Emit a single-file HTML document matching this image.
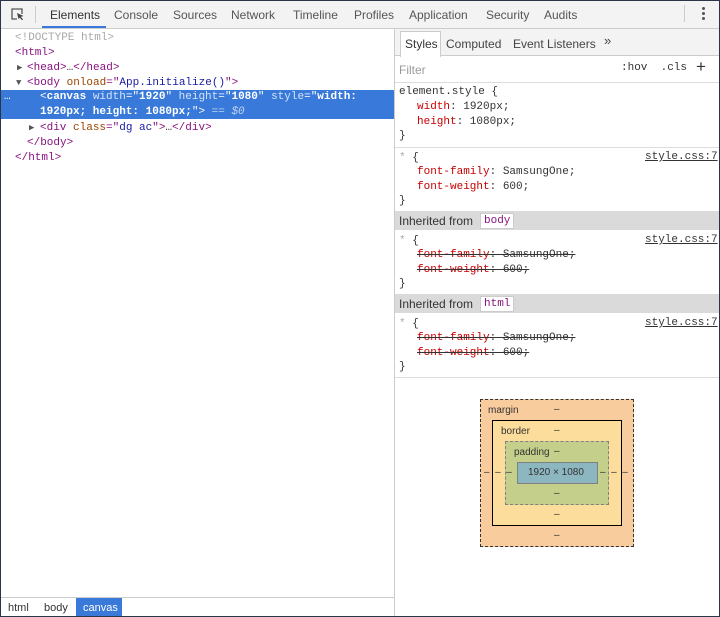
<!DOCTYPE html>
<html><head><style>
*{margin:0;padding:0;box-sizing:border-box}
body{width:720px;height:617px;overflow:hidden;background:#fff;font-family:"Liberation Sans",sans-serif;font-size:12px;color:#333;position:relative}
.a{position:absolute;white-space:pre}
.m{font-family:"Liberation Mono",monospace;font-size:11px}
.tag{color:#881280}.an{color:#994500}.av{color:#1a1aa6}.g{color:#a8a8a8}
.pn{color:#c80000}
.s{text-decoration:line-through}
.i{padding-left:18px}
</style></head><body>
<div class="a" style="left:0;top:0;width:720px;height:617px;border:1px solid #2a3646;z-index:9;pointer-events:none"></div>
<div class="a" style="left:0;top:0;width:720px;height:29px;background:#f3f3f3;border-bottom:1px solid #ccc"></div>
<svg class="a" style="left:10px;top:7px" width="15" height="15" viewBox="0 0 15 15"><path d="M7 12H2V2h10v5" fill="none" stroke="#555" stroke-width="1.3"/><path d="M7 6l6.5 3-2.7.9 2.2 2.5-1 .8-2.1-2.5L8.5 12z" fill="#444"/></svg>
<div class="a" style="left:35px;top:6px;width:1px;height:17px;background:#ccc"></div>
<div class="a" style="left:42px;top:0;width:64px;height:28px;border-bottom:2px solid #3879d9"></div>
<div class="a" style="left:50px;top:8px;color:#333">Elements</div>
<div class="a" style="left:114px;top:8px;color:#555">Console</div>
<div class="a" style="left:173px;top:8px;color:#555">Sources</div>
<div class="a" style="left:231px;top:8px;color:#555">Network</div>
<div class="a" style="left:293px;top:8px;color:#555">Timeline</div>
<div class="a" style="left:354px;top:8px;color:#555">Profiles</div>
<div class="a" style="left:409px;top:8px;color:#555">Application</div>
<div class="a" style="left:486px;top:8px;color:#555">Security</div>
<div class="a" style="left:544px;top:8px;color:#555">Audits</div>
<div class="a" style="left:684px;top:5px;width:1px;height:17px;background:#ccc"></div>
<div class="a" style="left:702px;top:7px;width:3px;height:3px;background:#555;border-radius:2px;box-shadow:0 5px 0 #555,0 10px 0 #555"></div>
<div class="a" style="left:0;top:90px;width:394px;height:29px;background:#3879d9"></div>
<div class="a m g" style="left:15px;top:31px;line-height:15px">&lt;!DOCTYPE html&gt;</div>
<div class="a m tag" style="left:15px;top:46px;line-height:15px">&lt;html&gt;</div>
<div class="a m" style="left:17px;top:61px;line-height:15px;font-size:9px;color:#555">▶</div>
<div class="a m tag" style="left:27px;top:61px;line-height:15px">&lt;head&gt;<span style="color:#333">…</span>&lt;/head&gt;</div>
<div class="a m" style="left:16px;top:76px;line-height:15px;font-size:9px;color:#555">▼</div>
<div class="a m tag" style="left:27px;top:76px;line-height:15px">&lt;body <span class="an">onload</span>="<span class="av">App.initialize()</span>"&gt;</div>
<div class="a m" style="left:4px;top:90px;line-height:15px;color:#fff">…</div>
<div class="a m" style="left:40px;top:90px;line-height:14.5px;color:#fff">&lt;<b>canvas</b> <span style="color:#d6e4f8">width</span>="<b>1920</b>" <span style="color:#d6e4f8">height</span>="<b>1080</b>" <span style="color:#d6e4f8">style</span>="<b>width:</b>
<b>1920px; height: 1080px;</b>"&gt; <span style="color:#c0d4f0">== <i>$0</i></span></div>
<div class="a m" style="left:29px;top:121px;line-height:15px;font-size:9px;color:#555">▶</div>
<div class="a m tag" style="left:40px;top:121px;line-height:15px">&lt;div <span class="an">class</span>="<span class="av">dg ac</span>"&gt;<span style="color:#333">…</span>&lt;/div&gt;</div>
<div class="a m tag" style="left:27px;top:136px;line-height:15px">&lt;/body&gt;</div>
<div class="a m tag" style="left:15px;top:151px;line-height:15px">&lt;/html&gt;</div>
<div class="a" style="left:0;top:597px;width:394px;height:20px;border-top:1px solid #ccc;background:#fff"></div>
<div class="a" style="left:8px;top:602px;font-size:11px">html</div>
<div class="a" style="left:44px;top:602px;font-size:11px">body</div>
<div class="a" style="left:76px;top:598px;width:46px;height:19px;background:#3879d9"></div>
<div class="a" style="left:83px;top:602px;font-size:11px;color:#fff">canvas</div>
<div class="a" style="left:394px;top:29px;width:1px;height:588px;background:#ccc"></div>
<div class="a" style="left:395px;top:29px;width:325px;height:27px;background:#f3f3f3;border-bottom:1px solid #ccc"></div>
<div class="a" style="left:400px;top:31px;width:41px;height:26px;background:#fff;border:1px solid #ccc;border-bottom:none"></div>
<div class="a" style="left:405px;top:37px">Styles</div>
<div class="a" style="left:446px;top:37px;color:#444">Computed</div>
<div class="a" style="left:513px;top:37px;color:#444">Event Listeners</div>
<div class="a" style="left:604px;top:33px;font-size:13px;color:#444">»</div>
<div class="a" style="left:399px;top:63px;color:#999">Filter</div>
<div class="a m" style="left:621px;top:62px;color:#333">:hov  .cls</div>
<div class="a" style="left:696px;top:57px;font-size:17px;color:#333">+</div>
<div class="a" style="left:395px;top:82px;width:325px;height:1px;background:#ddd"></div>
<div class="a m" style="left:399px;top:85px;line-height:14.8px;color:#333">element.style {
<span class="i"><span class="pn">width</span>: 1920px;</span>
<span class="i"><span class="pn">height</span>: 1080px;</span>
}</div>
<div class="a" style="left:395px;top:147px;width:325px;height:1px;background:#ddd"></div>
<div class="a m" style="left:399px;top:151px;line-height:14.3px;color:#333"><span class="g">*</span> {
<span class="i"><span class="pn">font-family</span>: SamsungOne;</span>
<span class="i"><span class="pn">font-weight</span>: 600;</span>
}</div>
<div class="a m" style="left:645px;top:151px;text-decoration:underline;color:#333">style.css:7</div>
<div class="a" style="left:395px;top:211px;width:325px;height:19px;background:#dadada"></div>
<div class="a" style="left:399px;top:214px;color:#333">Inherited from</div>
<div class="a m tag" style="left:480px;top:213px;background:#fff;padding:1px 3px;border:1px solid #ccc">body</div>
<div class="a m" style="left:399px;top:234px;line-height:14.3px;color:#333"><span class="g">*</span> {
<span class="i"><span class="s"><span class="pn">font-family</span>: SamsungOne;</span></span>
<span class="i"><span class="s"><span class="pn">font-weight</span>: 600;</span></span>
}</div>
<div class="a m" style="left:645px;top:234px;text-decoration:underline;color:#333">style.css:7</div>
<div class="a" style="left:395px;top:294px;width:325px;height:19px;background:#dadada"></div>
<div class="a" style="left:399px;top:297px;color:#333">Inherited from</div>
<div class="a m tag" style="left:480px;top:296px;background:#fff;padding:1px 3px;border:1px solid #ccc">html</div>
<div class="a m" style="left:399px;top:317px;line-height:14.3px;color:#333"><span class="g">*</span> {
<span class="i"><span class="s"><span class="pn">font-family</span>: SamsungOne;</span></span>
<span class="i"><span class="s"><span class="pn">font-weight</span>: 600;</span></span>
}</div>
<div class="a m" style="left:645px;top:317px;text-decoration:underline;color:#333">style.css:7</div>
<div class="a" style="left:395px;top:377px;width:325px;height:1px;background:#ddd"></div>
<div class="a" style="left:480px;top:399px;width:154px;height:148px;background:#f9cc9d;border:1px dashed #333"></div>
<div class="a" style="left:492px;top:420px;width:130px;height:106px;background:#fddd9b;border:1px solid #000"></div>
<div class="a" style="left:505px;top:441px;width:104px;height:64px;background:#c3cf8a;border:1px dashed #808080"></div>
<div class="a" style="left:517px;top:462px;width:81px;height:22px;background:#8cb6c0;border:1px solid #808080"></div>
<div class="a" style="left:488px;top:405px;font-size:10px;color:#333">margin</div>
<div class="a" style="left:501px;top:426px;font-size:10px;color:#333">border</div>
<div class="a" style="left:514px;top:447px;font-size:10px;color:#333">padding</div>
<div class="a" style="left:528px;top:467px;font-size:10px;color:#333">1920 × 1080</div>
<div class="a" style="left:554px;top:404px;font-size:10px">–</div>
<div class="a" style="left:554px;top:425px;font-size:10px">–</div>
<div class="a" style="left:554px;top:446px;font-size:10px">–</div>
<div class="a" style="left:554px;top:488px;font-size:10px">–</div>
<div class="a" style="left:554px;top:509px;font-size:10px">–</div>
<div class="a" style="left:554px;top:530px;font-size:10px">–</div>
<div class="a" style="left:484px;top:467px;font-size:10px">–  –  –</div>
<div class="a" style="left:600px;top:467px;font-size:10px">–  –  –</div>
</body></html>
